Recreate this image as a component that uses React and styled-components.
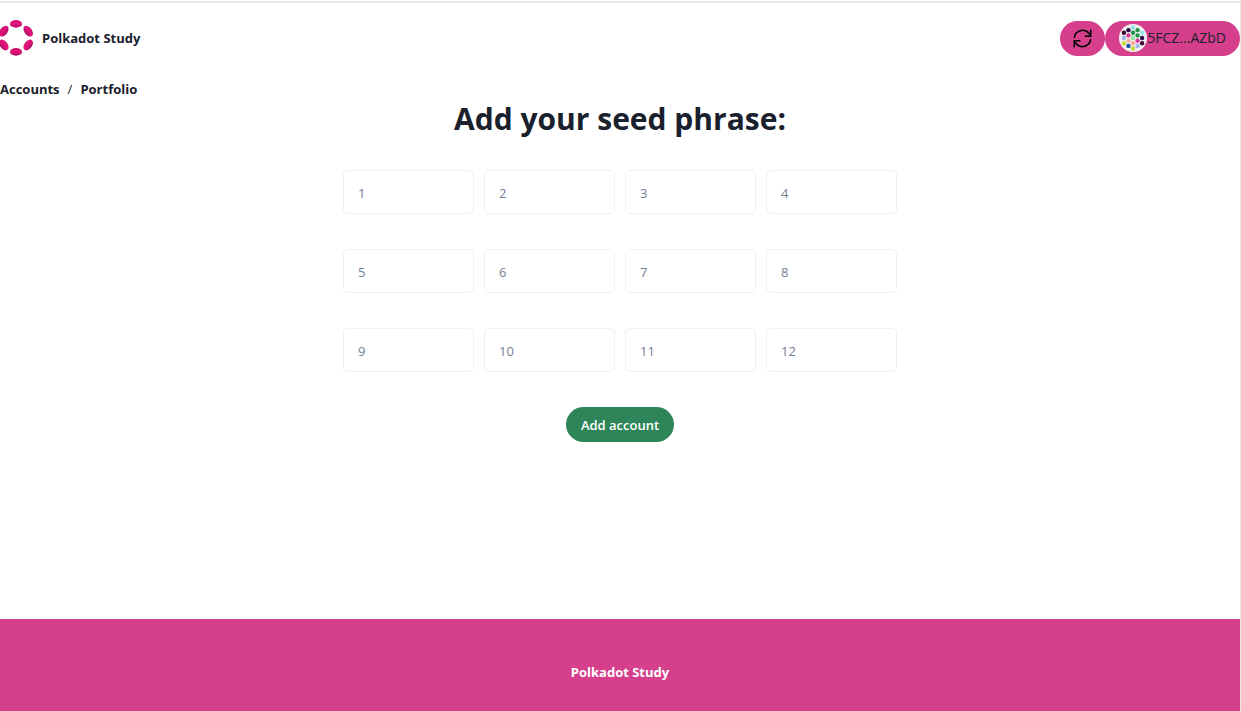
import React from "react";
import styled, { createGlobalStyle } from "styled-components";

const GlobalStyle = createGlobalStyle`
  *, *::before, *::after { box-sizing: border-box; }
  body {
    margin: 0;
    background: #ffffff;
    color: #1a202c;
    font-family: "Segoe UI", "Open Sans", "Noto Sans", sans-serif;
    font-size: 14px;
    line-height: 20px;
  }
  button, input { font: inherit; color: inherit; }
`;

const Page = styled.div`
  min-height: 100vh;
  display: flex;
  flex-direction: column;
  border-right: 1px solid #e9e9ec;
`;

const Header = styled.header`
  display: flex;
  align-items: center;
  justify-content: space-between;
  margin-top: 1px;
  padding: 17px 0;
  border-top: 2px solid #e6e6e6;
`;

const Brand = styled.a`
  display: flex;
  align-items: center;
  gap: 9px;
  color: inherit;
  font-size: 13px;
  font-weight: 700;
  text-decoration: none;
`;

const Actions = styled.div`
  display: flex;
`;

const Pill = styled.button`
  display: inline-flex;
  align-items: center;
  justify-content: center;
  height: 35px;
  padding: 0 ${(p) => p.$pad || 14}px;
  border: 0;
  border-radius: 18px;
  background: ${(p) => p.$bg || "#d53f8c"};
  color: ${(p) => p.$color || "#1a202c"};
  font-size: ${(p) => p.$size || 14}px;
  font-weight: ${(p) => p.$weight || 400};
  cursor: pointer;
`;

const Crumbs = styled.nav`
  ol {
    display: flex;
    gap: 8px;
    margin: 0;
    padding: 7px 0 0;
    list-style: none;
    font-size: 13px;
    line-height: 18px;
  }
  li { display: flex; gap: 8px; }
  li + li::before { content: "/"; }
  a {
    color: inherit;
    font-weight: 700;
    text-decoration: none;
  }
`;

const Main = styled.main`
  flex: 1;
  display: flex;
  flex-direction: column;
  align-items: center;
`;

const Title = styled.h1`
  margin: 0;
  font-size: 30px;
  font-weight: 700;
  line-height: 42px;
`;

const SeedForm = styled.form`
  display: flex;
  flex-direction: column;
  align-items: center;
  gap: 35px;
  width: 100%;
  max-width: 554px;
  padding: 30px 0;
`;

const SeedGrid = styled.div`
  display: grid;
  grid-template-columns: repeat(4, 1fr);
  gap: 35px 10px;
  width: 100%;
`;

const Word = styled.input`
  width: 100%;
  height: 44px;
  padding: 2px 14px 0;
  border: 1px solid #edf0f5;
  border-radius: 5px;
  background: #ffffff;
  font-size: 13px;
  &::placeholder { color: #718096; opacity: 1; }
`;

const Footer = styled.footer`
  display: flex;
  align-items: center;
  justify-content: center;
  height: 92px;
  padding-top: 13px;
  background: #d53f8c;
  color: #ffffff;
  font-size: 13px;
  font-weight: 700;
`;

const PETALS = [
  [16, 3.9, 0], [28.2, 11.2, 53], [28.2, 25, -53],
  [16, 31.9, 0], [3.8, 25, 53], [3.8, 11.2, -53],
];

function PolkadotLogo() {
  return (
    <svg width="33" height="36" viewBox="0 0 33 36" aria-hidden="true">
      <defs>
        <linearGradient id="petal" x1="0" y1="0" x2="0" y2="1">
          <stop offset="0" stopColor="#c41468" />
          <stop offset="0.4" stopColor="#e8127e" />
          <stop offset="1" stopColor="#a8135f" />
        </linearGradient>
      </defs>
      {PETALS.map(([x, y, tilt]) => (
        <ellipse
          key={`${x}-${y}`}
          cx={x}
          cy={y}
          rx="6.1"
          ry="3.8"
          fill="url(#petal)"
          transform={`rotate(${tilt} ${x} ${y})`}
        />
      ))}
    </svg>
  );
}

function RefreshIcon() {
  return (
    <svg
      width="21"
      height="21"
      viewBox="0 0 24 24"
      fill="none"
      stroke="#000000"
      strokeWidth="1.8"
      aria-hidden="true"
    >
      <path d="M21.4 2V9.4H14.4M2.6 22V14.6H9.6" />
      <path d="M2.6 11.2A9.5 9.5 0 0 1 19.4 6.2L21.4 9.2M21.4 12.8A9.5 9.5 0 0 1 4.6 17.8L2.6 14.8" />
    </svg>
  );
}

const DOTS = [
  [32, 8, "#8fe6ec"], [21.6, 14, "#2b0b3f"], [42.4, 14, "#1d9446"],
  [11.2, 20, "#38062c"], [32, 20, "#1d9446"], [52.8, 20, "#93e9ea"],
  [21.6, 26, "#d8359a"], [42.4, 26, "#1d9446"], [11.2, 32, "#9cb8ea"],
  [32, 32, "#90dfa4"], [52.8, 32, "#2b0b4a"], [21.6, 38, "#f3ac95"],
  [42.4, 38, "#d8359a"], [11.2, 44, "#c3d93a"], [32, 44, "#f3ac95"],
  [52.8, 44, "#4a0932"], [21.6, 50, "#174c98"], [42.4, 50, "#9cb8ea"],
  [32, 56, "#c3d93a"],
];

function Identicon() {
  return (
    <svg width="28" height="28" viewBox="0 0 64 64" aria-hidden="true">
      <circle cx="32" cy="32" r="32" fill="#f3f1f3" />
      {DOTS.map(([x, y, fill]) => (
        <circle key={`${x}-${y}`} cx={x} cy={y} r="5" fill={fill} />
      ))}
    </svg>
  );
}

const WORDS = Array.from({ length: 12 }, (_, i) => i + 1);

export default function App() {
  return (
    <>
      <GlobalStyle />
      <Page>
        <Header>
          <Brand href="#">
            <PolkadotLogo />
            Polkadot Study
          </Brand>
          <Actions>
            <Pill type="button" $pad={12} aria-label="Refresh">
              <RefreshIcon />
            </Pill>
            <Pill type="button">
              <Identicon />
              5FCZ...AZbD
            </Pill>
          </Actions>
        </Header>
        <Crumbs aria-label="Breadcrumb">
          <ol>
            <li><a href="#accounts">Accounts</a></li>
            <li><a href="#portfolio">Portfolio</a></li>
          </ol>
        </Crumbs>
        <Main>
          <Title>Add your seed phrase:</Title>
          <SeedForm onSubmit={(e) => e.preventDefault()}>
            <SeedGrid>
              {WORDS.map((n) => (
                <Word key={n} type="text" placeholder={n} aria-label={`Word ${n}`} />
              ))}
            </SeedGrid>
            <Pill type="submit" $bg="#2f855a" $color="#ffffff" $weight={600} $size={13} $pad={15}>
              Add account
            </Pill>
          </SeedForm>
        </Main>
        <Footer>Polkadot Study</Footer>
      </Page>
    </>
  );
}
